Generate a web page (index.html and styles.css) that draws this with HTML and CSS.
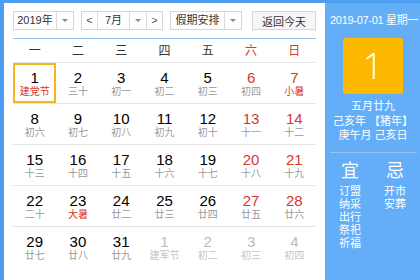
FILE: index.html
```html
<!DOCTYPE html>
<html lang="zh-CN">
<head>
    <meta charset="UTF-8">
    <title>万年历</title>
    <link rel="stylesheet" href="styles.css">
</head>
<body>
    <div class="calendar">
        <div class="main">
            <div class="toolbar">
                <div class="select year"><span class="label">2019年</span><span class="arrow"></span></div>
                <div class="month-group">
                    <span class="nav">&lt;</span>
                    <div class="month"><span class="label">7月</span><span class="arrow"></span></div>
                    <span class="nav">&gt;</span>
                </div>
                <div class="select holiday"><span class="label">假期安排</span><span class="arrow"></span></div>
                <button class="today-btn">返回今天</button>
            </div>

            <div class="weekdays">
                <span>一</span><span>二</span><span>三</span><span>四</span><span>五</span>
                <span class="red">六</span><span class="red">日</span>
            </div>

            <div class="week">
                <div class="day today"><b>1</b><i class="red">建党节</i></div>
                <div class="day"><b>2</b><i>三十</i></div>
                <div class="day"><b>3</b><i>初一</i></div>
                <div class="day"><b>4</b><i>初二</i></div>
                <div class="day"><b>5</b><i>初三</i></div>
                <div class="day weekend"><b>6</b><i>初四</i></div>
                <div class="day weekend"><b>7</b><i class="red">小暑</i></div>
            </div>
            <div class="week">
                <div class="day"><b>8</b><i>初六</i></div>
                <div class="day"><b>9</b><i>初七</i></div>
                <div class="day"><b>10</b><i>初八</i></div>
                <div class="day"><b>11</b><i>初九</i></div>
                <div class="day"><b>12</b><i>初十</i></div>
                <div class="day weekend"><b>13</b><i>十一</i></div>
                <div class="day weekend"><b>14</b><i>十二</i></div>
            </div>
            <div class="week">
                <div class="day"><b>15</b><i>十三</i></div>
                <div class="day"><b>16</b><i>十四</i></div>
                <div class="day"><b>17</b><i>十五</i></div>
                <div class="day"><b>18</b><i>十六</i></div>
                <div class="day"><b>19</b><i>十七</i></div>
                <div class="day weekend"><b>20</b><i>十八</i></div>
                <div class="day weekend"><b>21</b><i>十九</i></div>
            </div>
            <div class="week">
                <div class="day"><b>22</b><i>二十</i></div>
                <div class="day"><b>23</b><i class="red">大暑</i></div>
                <div class="day"><b>24</b><i>廿二</i></div>
                <div class="day"><b>25</b><i>廿三</i></div>
                <div class="day"><b>26</b><i>廿四</i></div>
                <div class="day weekend"><b>27</b><i>廿五</i></div>
                <div class="day weekend"><b>28</b><i>廿六</i></div>
            </div>
            <div class="week last">
                <div class="day"><b>29</b><i>廿七</i></div>
                <div class="day"><b>30</b><i>廿八</i></div>
                <div class="day"><b>31</b><i>廿九</i></div>
                <div class="day other"><b>1</b><i>建军节</i></div>
                <div class="day other"><b>2</b><i>初二</i></div>
                <div class="day other"><b>3</b><i>初三</i></div>
                <div class="day other"><b>4</b><i>初四</i></div>
            </div>
        </div>

        <div class="side">
            <div class="side-date">2019-07-01 星期一</div>
            <div class="big-day">1</div>
            <div class="lunar">
                <div>五月廿九</div>
                <div>己亥年 【猪年】</div>
                <div>庚午月 己亥日</div>
            </div>
            <div class="divider"></div>
            <div class="almanac">
                <div class="col">
                    <div class="head">宜</div>
                    <div>订盟</div>
                    <div>纳采</div>
                    <div>出行</div>
                    <div>祭祀</div>
                    <div>祈福</div>
                </div>
                <div class="col">
                    <div class="head">忌</div>
                    <div>开市</div>
                    <div>安葬</div>
                </div>
            </div>
        </div>
    </div>
</body>
</html>
```

FILE: styles.css
```css
body {
    margin: 0;
    background: #4d9ef0;
    font-family: "Liberation Sans", "Noto Sans CJK SC", sans-serif;
    overflow: hidden;
}
.calendar {
    display: flex;
    width: 460px;
    padding: 3px 0 6px 4px;
}
.main {
    width: 303px;
    height: 271px;
    padding: 8px 9px 0;
    background: #fff;
}

/* toolbar */
.toolbar {
    display: flex;
    align-items: center;
    height: 19px;
    font-size: 11px;
    color: #333;
    padding-bottom: 8px;
    border-bottom: 1px solid #93c3f0;
}
.select, .month-group {
    display: flex;
    height: 17px;
    border: 1px solid #d6d6d6;
    background: #fff;
}
.select .label, .month .label {
    flex: 1;
    text-align: center;
    line-height: 17px;
}
.arrow {
    width: 16px;
    border-left: 1px solid #dcdcdc;
    position: relative;
}
.arrow::after {
    content: "";
    position: absolute;
    left: 5px;
    top: 7px;
    border: 3px solid transparent;
    border-top: 3px solid #888;
}
.year {
    width: 59px;
}
.month-group {
    width: 80px;
    margin-left: 7px;
}
.nav {
    width: 15px;
    text-align: center;
    line-height: 16px;
    color: #555;
}
.month {
    display: flex;
    flex: 1;
    border-left: 1px solid #dcdcdc;
    border-right: 1px solid #dcdcdc;
}
.holiday {
    width: 70px;
    margin-left: 7px;
}
.today-btn {
    margin-left: 10px;
    width: 64px;
    height: 19px;
    padding: 0;
    border: 1px solid #d6d6d6;
    background: #f6f6f6;
    font-family: inherit;
    font-size: 11px;
    color: #333;
}

/* grid */
.weekdays, .week {
    display: grid;
    grid-template-columns: repeat(7, 1fr);
    text-align: center;
}
.weekdays {
    height: 23px;
    line-height: 24px;
    font-size: 12px;
    color: #333;
    border-bottom: 1px solid #e4e4e4;
}
.red {
    color: #d9362c !important;
}
.week {
    height: 40px;
    border-bottom: 1px solid #e4e4e4;
}
.week.last {
    border-bottom: none;
}
.day {
    padding-top: 7px;
    box-sizing: border-box;
}
.day b {
    display: block;
    font-weight: normal;
    font-size: 15px;
    line-height: 16px;
    color: #000;
}
.day i {
    display: block;
    font-style: normal;
    font-size: 10px;
    line-height: 12px;
    color: #999;
}
.day.weekend b {
    color: #d9362c;
}
.day.other b {
    color: #bbb;
}
.day.other i {
    color: #c4c4c4;
}
.day.today {
    border: 2px solid #f5b51d;
    padding-top: 5px;
}

/* side panel */
.side {
    width: 96px;
    background: #64aef8;
    color: #fff;
    font-size: 11px;
}
.side-date {
    padding: 9px 0 0 5px;
    line-height: 16px;
    letter-spacing: -0.3px;
    white-space: nowrap;
}
.big-day {
    width: 60px;
    height: 56px;
    margin: 10px auto 0;
    background: #fdb900;
    border-radius: 2px;
    text-align: center;
    font-family: "Open Sans", "Liberation Sans", sans-serif;
    font-weight: 300;
    font-size: 36px;
    line-height: 56px;
}
.lunar {
    margin-top: 5px;
    text-align: center;
    line-height: 14.5px;
    white-space: nowrap;
}
.divider {
    margin: 9px 4px 0 5px;
    border-top: 1px solid #8fc5fb;
}
.almanac {
    display: flex;
    gap: 5px;
    padding: 8px 0 0 5px;
}
.col {
    width: 40px;
    text-align: center;
    line-height: 13px;
}
.col .head {
    font-size: 18px;
    line-height: 20px;
    margin-bottom: 4px;
}
```
